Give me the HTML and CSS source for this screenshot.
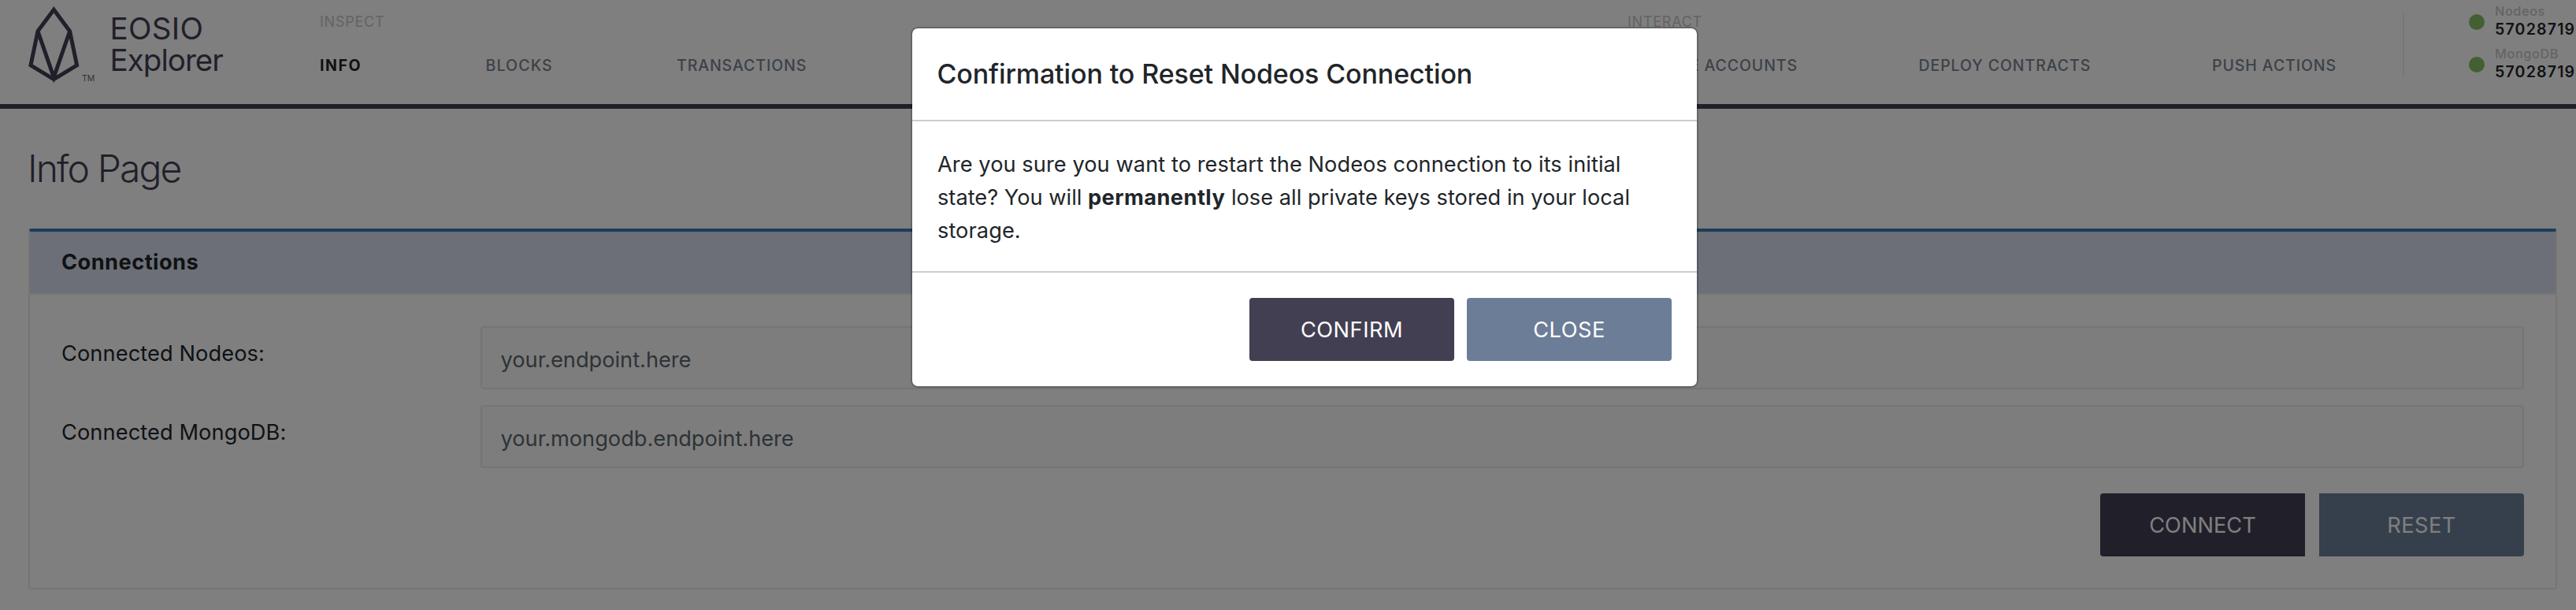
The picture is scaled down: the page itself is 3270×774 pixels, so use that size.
FILE: index.html
```html
<!DOCTYPE html>
<html lang="en">
<head>
<meta charset="utf-8">
<title>EOSIO Explorer</title>
<link rel="stylesheet" href="styles.css">
</head>
<body>
<header class="topbar">
  <div class="brand">
    <svg class="brand-mark" width="72" height="104" viewBox="32 4 72 104" fill="none" stroke="#443f54" stroke-width="5">
      <path d="M68.3 12.2 48 39.5 39 82.8 68.3 100.6 97.6 82.8 88.6 39.5Z"/>
      <path d="M48 39.5 68.3 98 88.6 39.5"/>
    </svg>
    <span class="brand-tm">TM</span>
    <div class="brand-name"><div class="brand-line">EOSIO</div><div class="brand-line brand-line-tight">Explorer</div></div>
  </div>
  <nav class="nav nav-inspect">
    <div class="nav-title">INSPECT</div>
    <a class="nav-link nav-link-active">INFO</a>
    <a class="nav-link nav-link-wide">BLOCKS</a>
    <a class="nav-link">TRANSACTIONS</a>
  </nav>
  <nav class="nav nav-interact">
    <div class="nav-title">INTERACT</div>
    <a class="nav-link">MANAGE ACCOUNTS</a>
    <a class="nav-link">DEPLOY CONTRACTS</a>
    <a class="nav-link">PUSH ACTIONS</a>
  </nav>
  <div class="status">
    <div class="status-row"><i class="dot"></i><div><div class="status-name">Nodeos</div><div class="status-block">57028719</div></div></div>
    <div class="status-row"><i class="dot"></i><div><div class="status-name">MongoDB</div><div class="status-block">57028719</div></div></div>
  </div>
</header>
<main class="page">
  <h1 class="page-title">Info Page</h1>
  <section class="card">
    <div class="card-header">Connections</div>
    <div class="card-body">
      <div class="field"><div class="label">Connected Nodeos:</div><div class="input">your.endpoint.here</div></div>
      <div class="field"><div class="label">Connected MongoDB:</div><div class="input">your.mongodb.endpoint.here</div></div>
      <div class="actions">
        <button class="btn btn-dark btn-first">CONNECT</button>
        <button class="btn btn-muted btn-last">RESET</button>
      </div>
    </div>
  </section>
</main>
<div class="backdrop">
  <div class="modal">
    <div class="modal-header">Confirmation to Reset Nodeos Connection</div>
    <div class="modal-body">Are you sure you want to restart the Nodeos connection to its initial<br><span class="tight">state? You will <b class="strong">permanently</b> lose all private keys stored in your local</span><br>storage.</div>
    <div class="modal-footer">
      <button class="btn btn-dark">CONFIRM</button>
      <button class="btn btn-slate">CLOSE</button>
    </div>
  </div>
</div>
</body>
</html>
```
FILE: styles.css
```css
* { box-sizing: border-box; }

body {
  margin: 0;
  height: 774px;
  overflow: hidden;
  background: #fff;
  color: #212529;
  font-family: Inter, "Liberation Sans", sans-serif;
  font-size: 27.2px;
}

.topbar {
  display: flex;
  height: 138px;
  border-bottom: 6px solid #443f54;
}

/* Brand */
.brand {
  display: flex;
  width: 406px;
  padding: 4px 0 0 32px;
  color: #443f54;
}
.brand-mark { flex: none; }
.brand-tm {
  width: 35.5px;
  padding-top: 89px;
  font-size: 10.5px;
  line-height: 14px;
  color: #67626f;
}
.brand-name { padding-top: 12px; }
.brand-line {
  font-size: 38.5px;
  line-height: 40px;
  letter-spacing: 0.35px;
}
.brand-line-tight { letter-spacing: -0.95px; }

/* Navigation */
.nav {
  display: grid;
  grid-template-rows: 25px 30px;
  row-gap: 28px;
  padding-top: 15px;
  align-content: start;
  white-space: nowrap;
}
.nav-inspect {
  width: 1660px;
  grid-template-columns: 210.5px 242.5px auto;
}
.nav-interact {
  width: 984px;
  grid-template-columns: 369.5px 372.5px auto;
}
.nav-title {
  grid-column: 1 / -1;
  font-size: 18px;
  line-height: 25px;
  letter-spacing: 0.75px;
  color: #c6c6c6;
}
.nav-link {
  font-size: 19.5px;
  font-weight: 500;
  line-height: 30px;
  letter-spacing: 0.92px;
  color: #788390;
}
.nav-link-wide { letter-spacing: 1.15px; }
.nav-link-active {
  font-weight: 700;
  letter-spacing: 1.6px;
  color: #212529;
}

/* Node status */
.status {
  height: 80px;
  margin-top: 16px;
  padding-left: 82px;
  border-left: 2px solid #ededed;
}
.status-row {
  display: flex;
  gap: 13px;
  height: 54px;
  margin-top: -12px;
}
.status-row + .status-row { margin-top: 0; }
.dot {
  flex: none;
  width: 20px;
  height: 20px;
  margin-top: 14px;
  border-radius: 50%;
  background: #84c064;
}
.status-name {
  font-size: 16.3px;
  font-weight: 500;
  line-height: 20px;
  letter-spacing: 0.6px;
  color: #c8c8c8;
}
.status-block {
  font-size: 19.5px;
  font-weight: 600;
  line-height: 26px;
  letter-spacing: 1.2px;
}

/* Page */
.page { padding: 46px 24px 0 36px; }
.page-title {
  margin: 0 0 46px;
  font-size: 48px;
  font-weight: 300;
  line-height: 60px;
  letter-spacing: -1.88px;
  text-indent: -1px;
  color: #443f54;
}
.card {
  height: 458px;
  border: 2px solid #ebebeb;
  border-top: 4px solid #367db3;
  border-radius: 4px;
}
.card-header {
  height: 80px;
  padding-left: 40px;
  border-bottom: 2px solid #ebebeb;
  background: #d8deee;
  font-weight: 700;
  line-height: 77px;
  letter-spacing: 0.47px;
}
.card-body { padding: 40px 40px 0; }
.field {
  display: flex;
  height: 80px;
  margin-bottom: 20px;
}
.label {
  width: 532px;
  line-height: 69px;
  letter-spacing: 0.1px;
}
.input {
  flex: 1;
  padding-left: 23.5px;
  border: 2px solid #ebebeb;
  border-radius: 4px;
  background: #fbfbfb;
  line-height: 81px;
  color: #5a666f;
}
.actions {
  display: flex;
  justify-content: flex-end;
  gap: 18px;
  margin-top: 32px;
}

.btn {
  width: 260px;
  height: 80px;
  padding: 0;
  border: 0;
  border-radius: 4px;
  font-family: inherit;
  font-size: 27.2px;
  line-height: 81px;
  letter-spacing: 0.5px;
  color: #fff;
}
.btn-dark { background: #433f52; }
.btn-muted { background: #6c8098; }
.btn-slate { background: #6c7d97; }
.btn-first {
  border-radius: 4px 0 0 4px;
  letter-spacing: 0.03px;
}
.btn-last { border-radius: 0 4px 4px 0; }

/* Dialog */
.backdrop {
  position: absolute;
  inset: 0;
  padding-top: 34px;
  background: rgba(0, 0, 0, 0.5);
}
.modal {
  width: 1000px;
  height: 458px;
  margin-left: 1156px;
  border: 2px solid rgba(0, 0, 0, 0.2);
  border-radius: 9px;
  background: #fff;
  background-clip: padding-box;
}
.modal-header {
  height: 118px;
  padding-left: 31.5px;
  border-bottom: 2px solid #c8ced3;
  font-size: 34px;
  font-weight: 500;
  line-height: 116px;
  letter-spacing: -0.12px;
}
.modal-body {
  height: 192px;
  padding: 33.5px 0 0 32px;
  border-bottom: 2px solid #c8ced3;
  line-height: 42px;
  letter-spacing: 0.07px;
  white-space: nowrap;
}
.tight { letter-spacing: 0.02px; }
.strong {
  font-weight: 700;
  letter-spacing: 0.45px;
}
.modal-footer {
  display: flex;
  justify-content: flex-end;
  gap: 16px;
  padding: 32px 32px 0 0;
}
```
